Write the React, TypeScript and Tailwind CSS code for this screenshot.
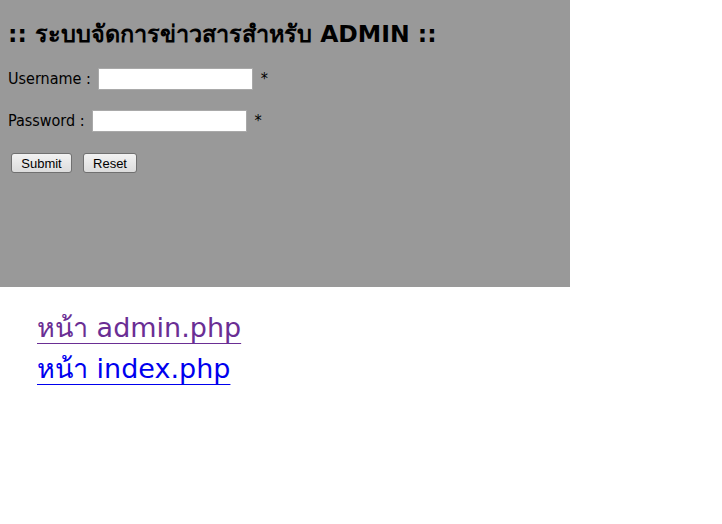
import React from "react";

const font = { fontFamily: '"DejaVu Sans", "Noto Sans", sans-serif' };
const labelFont = { fontFamily: '"DejaVu Sans Condensed", "DejaVu Sans", sans-serif' };
const btnFont = { fontFamily: '"Liberation Sans", Arial, sans-serif' };

export default function App() {
  return (
    <div className="min-h-[524px] bg-white text-black" style={font}>
      <div className="w-[570px] h-[287px] bg-[#999999] px-2 pt-[19px]">
        <h1 className="text-[23.5px] font-bold leading-[30px] mb-[19px]">
          :: ระบบจัดการข่าวสารสำหรับ ADMIN ::
        </h1>
        <div className="flex items-center h-[22px] text-[16px] mb-[20px]" style={labelFont}>
          <span>Username :</span>
          <input type="text" className="ml-[7px] w-[155px] h-[22px] bg-white border border-[#a9a9a9]" />
          <span className="ml-[8px]">*</span>
        </div>
        <div className="flex items-center h-[22px] text-[16px] mb-[21px]" style={labelFont}>
          <span>Password :</span>
          <input type="password" className="ml-[7px] w-[155px] h-[22px] bg-white border border-[#a9a9a9]" />
          <span className="ml-[8px]">*</span>
        </div>
        <div className="flex items-center gap-[11px] pl-[3px]">
          <button className="w-[61px] h-[20px] text-[13px] leading-none rounded-[3px] border border-[#707070] bg-gradient-to-b from-[#f2f2f2] to-[#dcdcdc]" style={btnFont}>
            Submit
          </button>
          <button className="w-[54px] h-[20px] text-[13px] leading-none rounded-[3px] border border-[#707070] bg-gradient-to-b from-[#f2f2f2] to-[#dcdcdc]" style={btnFont}>
            Reset
          </button>
        </div>
      </div>
      <div className="pl-[37px] pt-[20px] text-[27px] leading-[41px]">
        <div>
          <a href="#" className="text-[#6a2e94] underline underline-offset-[6px] decoration-1">หน้า admin.php</a>
        </div>
        <div>
          <a href="#" className="text-[#0000ee] underline underline-offset-[6px] decoration-1">หน้า index.php</a>
        </div>
      </div>
    </div>
  );
}
